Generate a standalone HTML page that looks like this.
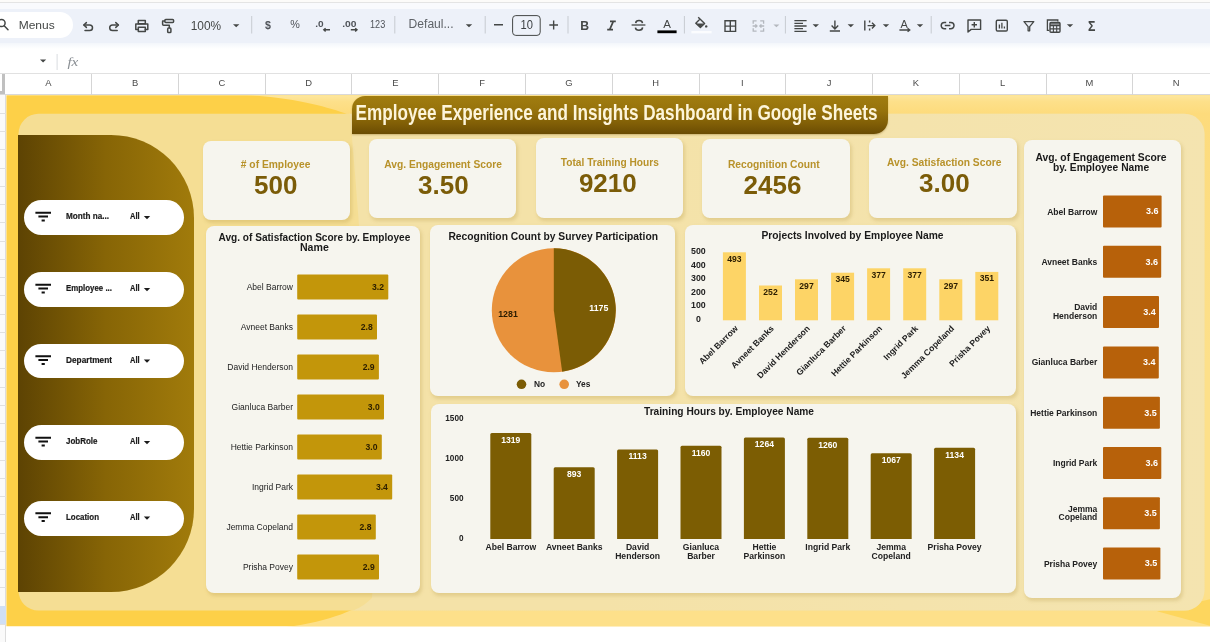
<!DOCTYPE html>
<html><head><meta charset="utf-8"><title>Employee Experience and Insights Dashboard</title>
<style>
html,body{margin:0;padding:0;background:#fff;}
body{width:1210px;height:642px;overflow:hidden;position:relative;font-family:"Liberation Sans",sans-serif;}
.abs{position:absolute;}
.card{position:absolute;background:#f6f5ee;border-radius:8px;box-shadow:1.5px 2.5px 3.5px rgba(165,130,40,.22);}
.pill{position:absolute;background:#fff;border-radius:18px;}
svg{position:absolute;left:0;top:0;will-change:transform;}
svg text{font-family:"Liberation Sans",sans-serif;}
</style></head><body>

<div class="abs" style="left:0;top:0;width:1210px;height:3px;background:#fcfbf9"></div>
<div class="abs" style="left:0;top:2px;width:1210px;height:1px;background:#e4e4e4"></div>
<div class="abs" style="left:0;top:3px;width:1210px;height:6px;background:#f9fafd"></div>
<div class="abs" style="left:0;top:8.6px;width:1210px;height:34.4px;background:#edf1f9"></div>
<div class="abs" style="left:0;top:43px;width:1210px;height:6px;background:linear-gradient(#f3f6fb,#ffffff)"></div>
<div class="abs" style="left:-20px;top:12.4px;width:93px;height:25.2px;border-radius:13px;background:#fff"></div>
<div class="abs" style="left:0;top:73px;width:1210px;height:22px;background:#fff;border-top:1px solid #e1e1e1;box-sizing:border-box"></div>
<div class="abs" style="left:0;top:94px;width:1210px;height:1px;background:#d9d9d9"></div>
<div class="abs" style="left:91.2px;top:74px;width:1px;height:21px;background:#d5d5d5"></div>
<div class="abs" style="left:177.9px;top:74px;width:1px;height:21px;background:#d5d5d5"></div>
<div class="abs" style="left:264.7px;top:74px;width:1px;height:21px;background:#d5d5d5"></div>
<div class="abs" style="left:351.4px;top:74px;width:1px;height:21px;background:#d5d5d5"></div>
<div class="abs" style="left:438.2px;top:74px;width:1px;height:21px;background:#d5d5d5"></div>
<div class="abs" style="left:525.0px;top:74px;width:1px;height:21px;background:#d5d5d5"></div>
<div class="abs" style="left:611.7px;top:74px;width:1px;height:21px;background:#d5d5d5"></div>
<div class="abs" style="left:698.5px;top:74px;width:1px;height:21px;background:#d5d5d5"></div>
<div class="abs" style="left:785.2px;top:74px;width:1px;height:21px;background:#d5d5d5"></div>
<div class="abs" style="left:872.0px;top:74px;width:1px;height:21px;background:#d5d5d5"></div>
<div class="abs" style="left:958.7px;top:74px;width:1px;height:21px;background:#d5d5d5"></div>
<div class="abs" style="left:1045.5px;top:74px;width:1px;height:21px;background:#d5d5d5"></div>
<div class="abs" style="left:1132.2px;top:74px;width:1px;height:21px;background:#d5d5d5"></div>
<div class="abs" style="left:0;top:95px;width:6.4px;height:547px;background:#fafafa;border-right:1px solid #dcdcdc;box-sizing:border-box"></div>
<div class="abs" style="left:0;top:112.8px;width:6px;height:1px;background:#e0e0e0"></div>
<div class="abs" style="left:0;top:131.1px;width:6px;height:1px;background:#e0e0e0"></div>
<div class="abs" style="left:0;top:149.3px;width:6px;height:1px;background:#e0e0e0"></div>
<div class="abs" style="left:0;top:167.6px;width:6px;height:1px;background:#e0e0e0"></div>
<div class="abs" style="left:0;top:185.8px;width:6px;height:1px;background:#e0e0e0"></div>
<div class="abs" style="left:0;top:204.1px;width:6px;height:1px;background:#e0e0e0"></div>
<div class="abs" style="left:0;top:222.3px;width:6px;height:1px;background:#e0e0e0"></div>
<div class="abs" style="left:0;top:240.6px;width:6px;height:1px;background:#e0e0e0"></div>
<div class="abs" style="left:0;top:258.8px;width:6px;height:1px;background:#e0e0e0"></div>
<div class="abs" style="left:0;top:277.1px;width:6px;height:1px;background:#e0e0e0"></div>
<div class="abs" style="left:0;top:295.3px;width:6px;height:1px;background:#e0e0e0"></div>
<div class="abs" style="left:0;top:313.6px;width:6px;height:1px;background:#e0e0e0"></div>
<div class="abs" style="left:0;top:331.8px;width:6px;height:1px;background:#e0e0e0"></div>
<div class="abs" style="left:0;top:350.1px;width:6px;height:1px;background:#e0e0e0"></div>
<div class="abs" style="left:0;top:368.3px;width:6px;height:1px;background:#e0e0e0"></div>
<div class="abs" style="left:0;top:386.6px;width:6px;height:1px;background:#e0e0e0"></div>
<div class="abs" style="left:0;top:404.8px;width:6px;height:1px;background:#e0e0e0"></div>
<div class="abs" style="left:0;top:423.1px;width:6px;height:1px;background:#e0e0e0"></div>
<div class="abs" style="left:0;top:441.3px;width:6px;height:1px;background:#e0e0e0"></div>
<div class="abs" style="left:0;top:459.6px;width:6px;height:1px;background:#e0e0e0"></div>
<div class="abs" style="left:0;top:477.8px;width:6px;height:1px;background:#e0e0e0"></div>
<div class="abs" style="left:0;top:496.1px;width:6px;height:1px;background:#e0e0e0"></div>
<div class="abs" style="left:0;top:514.3px;width:6px;height:1px;background:#e0e0e0"></div>
<div class="abs" style="left:0;top:532.5px;width:6px;height:1px;background:#e0e0e0"></div>
<div class="abs" style="left:0;top:550.8px;width:6px;height:1px;background:#e0e0e0"></div>
<div class="abs" style="left:0;top:569.0px;width:6px;height:1px;background:#e0e0e0"></div>
<div class="abs" style="left:0;top:587.3px;width:6px;height:1px;background:#e0e0e0"></div>
<div class="abs" style="left:0;top:605.5px;width:6px;height:1px;background:#e0e0e0"></div>
<div class="abs" style="left:0;top:623.8px;width:6px;height:1px;background:#e0e0e0"></div>
<div class="abs" style="left:0;top:605.6px;width:5.6px;height:18.2px;background:#d0dff5"></div>
<div class="abs" style="left:1.8px;top:73.5px;width:3.4px;height:20px;background:#c0c0c0"></div>
<div class="abs" style="left:0;top:91px;width:5.2px;height:3px;background:#c0c0c0"></div>
<svg width="1210" height="642" viewBox="0 0 1210 642">
<defs>
<clipPath id="cd"><rect x="6.4" y="95.3" width="1204" height="531"/></clipPath>
<clipPath id="ci"><rect x="18.5" y="113.8" width="1186" height="496.8" rx="20"/></clipPath>
<linearGradient id="gl" x1="0" x2="0" y1="95" y2="627" gradientUnits="userSpaceOnUse"><stop offset="0" stop-color="#fde7a0"/><stop offset="0.012" stop-color="#fde08a"/><stop offset="0.035" stop-color="#fddb7c"/><stop offset="0.5" stop-color="#fde08a"/><stop offset="1" stop-color="#fde08a"/></linearGradient>
<linearGradient id="gi" x1="0" x2="1" y1="0" y2="0"><stop offset="0" stop-color="#f4e2a8"/><stop offset="0.3" stop-color="#f4e2a8"/><stop offset="1" stop-color="#f4e4b0"/></linearGradient>
</defs>
<g clip-path="url(#cd)">
<rect x="6" y="95" width="1204" height="532" fill="#fdd048"/>
<path d="M225 94 C 290 96, 325 106, 348 114.5 L 372 598 C 360 608, 330 622, 286 627 L 1215 627 L 1215 94 Z" fill="url(#gl)"/>
<path d="M1157 611.3 L1215 598 L1215 627 Z" fill="#fdd65e"/>
</g>
<rect x="18.5" y="113.8" width="1186" height="496.8" rx="20" fill="#f5de94"/>
<g clip-path="url(#ci)"><path d="M340 100 L 350 114.5 C 362 250, 380 500, 372 598 C 366 604, 360 608, 350 612 L 1215 627 L 1215 94 Z" fill="url(#gi)"/></g>
</svg>
<div class="abs" style="left:18px;top:134.5px;width:176px;height:457.5px;border-radius:0 83px 83px 0;background:linear-gradient(90deg,#5d4303 0%,#876506 50%,#a17b0b 100%)"></div>
<div class="abs" style="left:351.5px;top:96px;width:536px;height:38.3px;border-radius:13px 0 14px 0;box-shadow:0 1px 2px rgba(120,90,10,.35);background:linear-gradient(180deg,#a17d10 0%,#96720b 40%,#7f5d06 75%,#6a4c03 100%)"></div>
<div class="card" style="left:202.6px;top:141.2px;width:147px;height:79px"></div>
<div class="card" style="left:368.6px;top:139px;width:147.6px;height:79px"></div>
<div class="card" style="left:535.7px;top:138.4px;width:147.2px;height:79.3px"></div>
<div class="card" style="left:702px;top:139px;width:148.1px;height:79px"></div>
<div class="card" style="left:869px;top:138.4px;width:147.6px;height:79.3px"></div>
<div class="card" style="left:205.9px;top:225.9px;width:214.5px;height:367px"></div>
<div class="card" style="left:430.4px;top:225.4px;width:244.8px;height:170.8px"></div>
<div class="card" style="left:684.5px;top:225.4px;width:331.6px;height:170.3px"></div>
<div class="card" style="left:430.8px;top:404.2px;width:585px;height:188.6px"></div>
<div class="card" style="left:1024.4px;top:140.1px;width:156.3px;height:457.8px"></div>
<div class="pill" style="left:24px;top:200px;width:160px;height:34.5px"></div>
<div class="pill" style="left:24px;top:272px;width:160px;height:34.5px"></div>
<div class="pill" style="left:24px;top:343.5px;width:160px;height:34.5px"></div>
<div class="pill" style="left:24px;top:425px;width:160px;height:34.5px"></div>
<div class="pill" style="left:24px;top:501.4px;width:160px;height:34.5px"></div>
<svg width="1210" height="642" viewBox="0 0 1210 642">
<g fill="none" stroke="#444746" stroke-width="1.5" stroke-linecap="round" stroke-linejoin="round">
<circle cx="1.5" cy="23" r="3.6"/><path d="M4.2 25.8 L8 29.8"/>
<path d="M86.4 22.6 L83.8 25 L86.4 27.4"/><path d="M84 25 H89.6 a2.9 2.8 0 0 1 0 5.6 H85"/>
<path d="M115.8 22.6 L118.4 25 L115.8 27.4"/><path d="M118.2 25 H112.6 a2.9 2.8 0 0 0 0 5.6 H117.2"/>
<rect x="138.3" y="20.5" width="7" height="3.2"/><path d="M138.3 29.5 H135.8 V23.9 H147.8 V29.5 H145.3"/><rect x="138.3" y="27.2" width="7" height="4.2"/>
<rect x="164.8" y="19.4" width="8.8" height="3.2" rx="1"/><path d="M164.8 21 H162.6 V24.2 Q162.6 25.2 163.6 25.2 H169.3 V27.8"/><rect x="167.7" y="28" width="3.2" height="4.6" rx="0.9"/>
</g>
<text x="18.7" y="29.2" font-size="11.8" font-weight="normal" fill="#444746" text-anchor="start" textLength="36" lengthAdjust="spacingAndGlyphs" >Menus</text>
<text x="190.7" y="29.7" font-size="12" font-weight="normal" fill="#444746" text-anchor="start" textLength="30.4" lengthAdjust="spacingAndGlyphs" >100%</text>
<path d="M233 24.2 h6.4 l-3.2 3 z" fill="#444746"/>
<rect x="251.2" y="16" width="1" height="17.5" fill="#c7cbd1"/>
<rect x="394.3" y="16" width="1" height="17.5" fill="#c7cbd1"/>
<rect x="484.7" y="16" width="1" height="17.5" fill="#c7cbd1"/>
<rect x="567.5" y="16" width="1" height="17.5" fill="#c7cbd1"/>
<rect x="683.9" y="16" width="1" height="17.5" fill="#c7cbd1"/>
<rect x="784.9" y="16" width="1" height="17.5" fill="#c7cbd1"/>
<rect x="930.7" y="16" width="1" height="17.5" fill="#c7cbd1"/>
<text x="268" y="28.7" font-size="10.6" font-weight="bold" fill="#50545a" text-anchor="middle" >$</text>
<text x="295" y="28" font-size="10.8" font-weight="normal" fill="#50545a" text-anchor="middle" >%</text>
<text x="315.2" y="26.6" font-size="9.8" font-weight="bold" fill="#50545a" text-anchor="start" textLength="8.4" lengthAdjust="spacingAndGlyphs" >.0</text>
<path d="M330 29.8 H323.8 M325.6 28.2 L323.8 29.8 L325.6 31.4" fill="none" stroke="#444746" stroke-width="1.4"/>
<text x="342.2" y="26.6" font-size="9.8" font-weight="bold" fill="#50545a" text-anchor="start" textLength="14.3" lengthAdjust="spacingAndGlyphs" >.00</text>
<path d="M350.8 29.8 H357 M355.2 28.2 L357 29.8 L355.2 31.4" fill="none" stroke="#444746" stroke-width="1.4"/>
<text x="370" y="28.3" font-size="10.2" font-weight="normal" fill="#50545a" text-anchor="start" textLength="15.2" lengthAdjust="spacingAndGlyphs" >123</text>
<text x="408.6" y="28.4" font-size="12" font-weight="normal" fill="#5f6368" text-anchor="start" textLength="45" lengthAdjust="spacingAndGlyphs" >Defaul...</text>
<path d="M465.8 24.2 h6.4 l-3.2 3 z" fill="#444746"/>
<rect x="494" y="24" width="9" height="1.5" fill="#444746"/>
<rect x="512.6" y="15.6" width="27.6" height="19.8" rx="3.2" fill="none" stroke="#444746" stroke-width="1"/>
<text x="526.8" y="29.3" font-size="12.2" font-weight="normal" fill="#3c4043" text-anchor="middle" textLength="12.4" lengthAdjust="spacingAndGlyphs" >10</text>
<path d="M549.3 25 H558 M553.65 20.6 V29.4" stroke="#444746" stroke-width="1.4" fill="none"/>
<text x="584.6" y="29.6" font-size="12.2" font-weight="bold" fill="#444746" text-anchor="middle" >B</text>
<path d="M610 21.4 H615.8 M607.2 29.6 H613 M613.3 21.4 L609.7 29.6" stroke="#444746" stroke-width="1.7" fill="none"/>
<path d="M631.6 25 H645.4" stroke="#444746" stroke-width="1.3" fill="none"/><path d="M642.5 23.1 C642.3 21.4 640.8 20.6 639 20.6 C637.2 20.6 635.8 21.5 635.7 23.1 M635.4 27.6 C635.6 29.4 637.1 30.2 639 30.2 C640.9 30.2 642.5 29.3 642.6 27.4" stroke="#444746" stroke-width="1.5" fill="none"/>
<text x="667" y="28" font-size="11.5" font-weight="normal" fill="#444746" text-anchor="middle" >A</text>
<rect x="657.4" y="30.4" width="19.2" height="2.8" fill="#000"/>
<path d="M698.2 17.2 L704.6 23.6 L700.4 27.6 L695.8 23.2 L700 19" fill="none" stroke="#444746" stroke-width="1.4" stroke-linejoin="round"/><path d="M696.4 23.4 H704.2 L700.4 27 Z" fill="#444746"/><circle cx="706.2" cy="26.4" r="1.2" fill="#444746"/>
<rect x="691.4" y="31" width="20.2" height="2.4" fill="#fbfcfe"/>
<path d="M725 20.8 H735.6 V31.4 H725 Z M730.3 20.8 V31.4 M725 26.1 H735.6" fill="none" stroke="#444746" stroke-width="1.4"/>
<path d="M756.6 20.8 H753.2 V23.8 M753.2 28.2 V31.2 H756.6 M760.2 20.8 H763.6 V23.8 M763.6 28.2 V31.2 H760.2 M752.6 26 H757 M755.4 24.4 L757 26 L755.4 27.6 M764.2 26 H759.8 M761.4 24.4 L759.8 26 L761.4 27.6" fill="none" stroke="#b4b8be" stroke-width="1.3"/>
<path d="M773.4 24.4 h6 l-3.0 2.8 z" fill="#b4b8be"/>
<path d="M794.4 20.6 H806.6 M794.4 23.3 H803 M794.4 26 H806.6 M794.4 28.7 H803 M794.4 31.4 H806.6" stroke="#444746" stroke-width="1.3" fill="none"/>
<path d="M812.6 24.2 h6.4 l-3.2 3 z" fill="#444746"/>
<path d="M834.9 20.4 V28.6 M831.6 25.6 L834.9 28.9 L838.2 25.6 M829.8 31 H840" stroke="#444746" stroke-width="1.4" fill="none"/>
<path d="M847.6 24.2 h6.4 l-3.2 3 z" fill="#444746"/>
<path d="M864.8 20.6 V30.6 M869.6 20.6 V22.6 M869.6 28.6 V30.6 M867.6 25.6 H874.6 M872 22.8 L874.8 25.6 L872 28.4" stroke="#444746" stroke-width="1.4" fill="none"/>
<path d="M882.8 24.2 h6.4 l-3.2 3 z" fill="#444746"/>
<text x="904.2" y="27.8" font-size="11" font-weight="normal" fill="#444746" text-anchor="middle" >A</text>
<path d="M899.4 30 H909.6 M907.6 28.2 L909.8 30 L907.6 31.8" stroke="#444746" stroke-width="1.3" fill="none"/>
<path d="M916.8 24.2 h6.4 l-3.2 3 z" fill="#444746"/>
<path d="M946.2 22.4 H944.4 a3.2 3.2 0 0 0 0 6.4 H946.2 M949 22.4 H950.8 a3.2 3.2 0 0 1 0 6.4 H949 M944.8 25.6 H950.4" stroke="#444746" stroke-width="1.5" fill="none"/>
<path d="M968 20 H980.6 V29.4 H971.2 L968 32 Z M974.3 22 V27.4 M971.6 24.7 H977" stroke="#444746" stroke-width="1.4" fill="none" stroke-linejoin="round"/>
<rect x="996.3" y="20.2" width="11" height="10.8" rx="1.2" stroke="#444746" stroke-width="1.4" fill="none"/><path d="M999.4 28.6 V24.6 M1001.9 28.6 V22.8 M1004.4 28.6 V26.6" stroke="#444746" stroke-width="1.3" fill="none"/>
<path d="M1024 21.6 H1033.8 L1029.7 26.6 V30.8 H1028.1 V26.6 Z" stroke="#444746" stroke-width="1.3" fill="none" stroke-linejoin="round"/>
<path d="M1049.2 30.4 H1047.4 V20 H1057.8 V21.6" stroke="#444746" stroke-width="1.3" fill="none"/><rect x="1050" y="22.4" width="10" height="9.8" rx="1" stroke="#444746" stroke-width="1.4" fill="none"/><path d="M1050 25.6 H1060 M1050 28.9 H1060 M1053.4 25.6 V32 M1056.7 25.6 V32" stroke="#444746" stroke-width="1.1" fill="none"/><rect x="1050" y="22.4" width="10" height="2.4" fill="#444746" opacity="0.75"/>
<path d="M1066.8 24.2 h6.4 l-3.2 3 z" fill="#444746"/>
<text x="1091.7" y="30.7" font-size="14.2" font-weight="bold" fill="#444746" text-anchor="middle" textLength="7.4" lengthAdjust="spacingAndGlyphs" >Σ</text>
<path d="M40 59.6 h6.2 l-3.1 2.9 z" fill="#444746"/>
<rect x="56.6" y="54" width="1" height="16" fill="#dadce0"/>
<text x="67.4" y="66" font-size="13" font-weight="normal" fill="#8a8f94" text-anchor="start" textLength="11" lengthAdjust="spacingAndGlyphs" style="font-style:italic;font-family:'Liberation Serif',serif">fx</text>
<text x="48.4" y="85.7" font-size="9.4" font-weight="normal" fill="#4a4a4a" text-anchor="middle" >A</text>
<text x="135.2" y="85.7" font-size="9.4" font-weight="normal" fill="#4a4a4a" text-anchor="middle" >B</text>
<text x="221.9" y="85.7" font-size="9.4" font-weight="normal" fill="#4a4a4a" text-anchor="middle" >C</text>
<text x="308.6" y="85.7" font-size="9.4" font-weight="normal" fill="#4a4a4a" text-anchor="middle" >D</text>
<text x="395.4" y="85.7" font-size="9.4" font-weight="normal" fill="#4a4a4a" text-anchor="middle" >E</text>
<text x="482.1" y="85.7" font-size="9.4" font-weight="normal" fill="#4a4a4a" text-anchor="middle" >F</text>
<text x="568.9" y="85.7" font-size="9.4" font-weight="normal" fill="#4a4a4a" text-anchor="middle" >G</text>
<text x="655.6" y="85.7" font-size="9.4" font-weight="normal" fill="#4a4a4a" text-anchor="middle" >H</text>
<text x="742.4" y="85.7" font-size="9.4" font-weight="normal" fill="#4a4a4a" text-anchor="middle" >I</text>
<text x="829.1" y="85.7" font-size="9.4" font-weight="normal" fill="#4a4a4a" text-anchor="middle" >J</text>
<text x="915.9" y="85.7" font-size="9.4" font-weight="normal" fill="#4a4a4a" text-anchor="middle" >K</text>
<text x="1002.6" y="85.7" font-size="9.4" font-weight="normal" fill="#4a4a4a" text-anchor="middle" >L</text>
<text x="1089.4" y="85.7" font-size="9.4" font-weight="normal" fill="#4a4a4a" text-anchor="middle" >M</text>
<text x="1176.2" y="85.7" font-size="9.4" font-weight="normal" fill="#4a4a4a" text-anchor="middle" >N</text>
<text x="355.5" y="119.8" font-size="22" font-weight="bold" fill="#fdf5da" text-anchor="start" textLength="522" lengthAdjust="spacingAndGlyphs" >Employee Experience and Insights Dashboard in Google Sheets</text>
<text x="275.6" y="167.8" font-size="10.6" font-weight="bold" fill="#b8922a" text-anchor="middle" textLength="69.6" lengthAdjust="spacingAndGlyphs" ># of Employee</text>
<text x="275.8" y="194.4" font-size="26" font-weight="bold" fill="#7b5c08" text-anchor="middle" >500</text>
<text x="443.1" y="167.7" font-size="10.6" font-weight="bold" fill="#b8922a" text-anchor="middle" textLength="117.6" lengthAdjust="spacingAndGlyphs" >Avg. Engagement Score</text>
<text x="443.4" y="194.4" font-size="26" font-weight="bold" fill="#7b5c08" text-anchor="middle" >3.50</text>
<text x="609.8" y="165.6" font-size="10.6" font-weight="bold" fill="#b8922a" text-anchor="middle" textLength="98" lengthAdjust="spacingAndGlyphs" >Total Training Hours</text>
<text x="607.8" y="192.4" font-size="26" font-weight="bold" fill="#7b5c08" text-anchor="middle" >9210</text>
<text x="773.8" y="167.7" font-size="10.6" font-weight="bold" fill="#b8922a" text-anchor="middle" textLength="91.8" lengthAdjust="spacingAndGlyphs" >Recognition Count</text>
<text x="772.5" y="194.4" font-size="26" font-weight="bold" fill="#7b5c08" text-anchor="middle" >2456</text>
<text x="944.2" y="165.6" font-size="10.6" font-weight="bold" fill="#b8922a" text-anchor="middle" textLength="114.4" lengthAdjust="spacingAndGlyphs" >Avg. Satisfaction Score</text>
<text x="944.4" y="192.3" font-size="26" font-weight="bold" fill="#7b5c08" text-anchor="middle" >3.00</text>
<path d="M35.4 212.7 H51 M38.4 216.6 H48 M41.6 220.4 H44.8" stroke="#111" stroke-width="2" fill="none"/>
<text x="66" y="219.2" font-size="8.8" font-weight="bold" fill="#1b1b1b" text-anchor="start" textLength="43" lengthAdjust="spacingAndGlyphs" stroke="#1b1b1b" stroke-width="0.2">Month na...</text>
<text x="130" y="219.2" font-size="8.8" font-weight="bold" fill="#1b1b1b" text-anchor="start" textLength="9.6" lengthAdjust="spacingAndGlyphs" stroke="#1b1b1b" stroke-width="0.2">All</text>
<path d="M143.8 216.0 h6.4 l-3.2 3.2 z" fill="#1b1b1b"/>
<path d="M35.4 284.7 H51 M38.4 288.6 H48 M41.6 292.4 H44.8" stroke="#111" stroke-width="2" fill="none"/>
<text x="66" y="291.2" font-size="8.8" font-weight="bold" fill="#1b1b1b" text-anchor="start" textLength="46" lengthAdjust="spacingAndGlyphs" stroke="#1b1b1b" stroke-width="0.2">Employee ...</text>
<text x="130" y="291.2" font-size="8.8" font-weight="bold" fill="#1b1b1b" text-anchor="start" textLength="9.6" lengthAdjust="spacingAndGlyphs" stroke="#1b1b1b" stroke-width="0.2">All</text>
<path d="M143.8 288.0 h6.4 l-3.2 3.2 z" fill="#1b1b1b"/>
<path d="M35.4 356.2 H51 M38.4 360.1 H48 M41.6 363.9 H44.8" stroke="#111" stroke-width="2" fill="none"/>
<text x="66" y="362.7" font-size="8.8" font-weight="bold" fill="#1b1b1b" text-anchor="start" textLength="46" lengthAdjust="spacingAndGlyphs" stroke="#1b1b1b" stroke-width="0.2">Department</text>
<text x="130" y="362.7" font-size="8.8" font-weight="bold" fill="#1b1b1b" text-anchor="start" textLength="9.6" lengthAdjust="spacingAndGlyphs" stroke="#1b1b1b" stroke-width="0.2">All</text>
<path d="M143.8 359.5 h6.4 l-3.2 3.2 z" fill="#1b1b1b"/>
<path d="M35.4 437.7 H51 M38.4 441.6 H48 M41.6 445.4 H44.8" stroke="#111" stroke-width="2" fill="none"/>
<text x="66" y="444.2" font-size="8.8" font-weight="bold" fill="#1b1b1b" text-anchor="start" textLength="31.5" lengthAdjust="spacingAndGlyphs" stroke="#1b1b1b" stroke-width="0.2">JobRole</text>
<text x="130" y="444.2" font-size="8.8" font-weight="bold" fill="#1b1b1b" text-anchor="start" textLength="9.6" lengthAdjust="spacingAndGlyphs" stroke="#1b1b1b" stroke-width="0.2">All</text>
<path d="M143.8 441.0 h6.4 l-3.2 3.2 z" fill="#1b1b1b"/>
<path d="M35.4 513.3000000000001 H51 M38.4 517.2 H48 M41.6 521.0 H44.8" stroke="#111" stroke-width="2" fill="none"/>
<text x="66" y="519.8000000000001" font-size="8.8" font-weight="bold" fill="#1b1b1b" text-anchor="start" textLength="33" lengthAdjust="spacingAndGlyphs" stroke="#1b1b1b" stroke-width="0.2">Location</text>
<text x="130" y="519.8000000000001" font-size="8.8" font-weight="bold" fill="#1b1b1b" text-anchor="start" textLength="9.6" lengthAdjust="spacingAndGlyphs" stroke="#1b1b1b" stroke-width="0.2">All</text>
<path d="M143.8 516.6 h6.4 l-3.2 3.2 z" fill="#1b1b1b"/>
<text x="314.4" y="241" font-size="10.6" font-weight="bold" fill="#1a1a1a" text-anchor="middle" textLength="191.7" lengthAdjust="spacingAndGlyphs" >Avg. of Satisfaction Score by. Employee</text>
<text x="314.4" y="250.8" font-size="10.6" font-weight="bold" fill="#1a1a1a" text-anchor="middle" >Name</text>
<rect x="297.2" y="274.6" width="91.1" height="24.9" rx="1" fill="#c3960a"/>
<text x="293" y="290.1" font-size="8.5" font-weight="normal" fill="#222" text-anchor="end" >Abel Barrow</text>
<text x="384.0" y="290.0" font-size="8.6" font-weight="bold" fill="#2a1d00" text-anchor="end" >3.2</text>
<rect x="297.2" y="314.6" width="79.8" height="24.9" rx="1" fill="#c3960a"/>
<text x="293" y="330.1" font-size="8.5" font-weight="normal" fill="#222" text-anchor="end" >Avneet Banks</text>
<text x="372.7" y="330.0" font-size="8.6" font-weight="bold" fill="#2a1d00" text-anchor="end" >2.8</text>
<rect x="297.2" y="354.6" width="81.7" height="24.9" rx="1" fill="#c3960a"/>
<text x="293" y="370.1" font-size="8.5" font-weight="normal" fill="#222" text-anchor="end" >David Henderson</text>
<text x="374.6" y="370.0" font-size="8.6" font-weight="bold" fill="#2a1d00" text-anchor="end" >2.9</text>
<rect x="297.2" y="394.6" width="86.8" height="24.9" rx="1" fill="#c3960a"/>
<text x="293" y="410.1" font-size="8.5" font-weight="normal" fill="#222" text-anchor="end" >Gianluca Barber</text>
<text x="379.7" y="410.0" font-size="8.6" font-weight="bold" fill="#2a1d00" text-anchor="end" >3.0</text>
<rect x="297.2" y="434.6" width="84.6" height="24.9" rx="1" fill="#c3960a"/>
<text x="293" y="450.1" font-size="8.5" font-weight="normal" fill="#222" text-anchor="end" >Hettie Parkinson</text>
<text x="377.5" y="450.0" font-size="8.6" font-weight="bold" fill="#2a1d00" text-anchor="end" >3.0</text>
<rect x="297.2" y="474.6" width="95.0" height="24.9" rx="1" fill="#c3960a"/>
<text x="293" y="490.1" font-size="8.5" font-weight="normal" fill="#222" text-anchor="end" >Ingrid Park</text>
<text x="387.9" y="490.0" font-size="8.6" font-weight="bold" fill="#2a1d00" text-anchor="end" >3.4</text>
<rect x="297.2" y="514.6" width="78.6" height="24.9" rx="1" fill="#c3960a"/>
<text x="293" y="530.1" font-size="8.5" font-weight="normal" fill="#222" text-anchor="end" >Jemma Copeland</text>
<text x="371.5" y="530.0" font-size="8.6" font-weight="bold" fill="#2a1d00" text-anchor="end" >2.8</text>
<rect x="297.2" y="554.6" width="81.8" height="24.9" rx="1" fill="#c3960a"/>
<text x="293" y="570.1" font-size="8.5" font-weight="normal" fill="#222" text-anchor="end" >Prisha Povey</text>
<text x="374.7" y="570.0" font-size="8.6" font-weight="bold" fill="#2a1d00" text-anchor="end" >2.9</text>
<text x="553.2" y="240.4" font-size="10.6" font-weight="bold" fill="#1a1a1a" text-anchor="middle" textLength="209.6" lengthAdjust="spacingAndGlyphs" >Recognition Count by Survey Participation</text>
<circle cx="553.8" cy="310.3" r="62" fill="#e8923c"/>
<path d="M553.8 310.3 L553.8 248.3 A62 62 0 0 1 562.18 371.73 Z" fill="#7b5c05"/>
<text x="598.8" y="311.2" font-size="8.8" font-weight="bold" fill="#fff" text-anchor="middle" >1175</text>
<text x="508" y="316.8" font-size="8.8" font-weight="bold" fill="#2a1c00" text-anchor="middle" >1281</text>
<circle cx="521.5" cy="384.3" r="4.8" fill="#7b5c05"/><circle cx="564.2" cy="384.3" r="4.8" fill="#e8923c"/>
<text x="534" y="387.3" font-size="8.4" font-weight="bold" fill="#222" text-anchor="start" >No</text>
<text x="576" y="387.3" font-size="8.4" font-weight="bold" fill="#222" text-anchor="start" >Yes</text>
<text x="852.5" y="238.8" font-size="10.6" font-weight="bold" fill="#1a1a1a" text-anchor="middle" textLength="182" lengthAdjust="spacingAndGlyphs" >Projects Involved by Employee Name</text>
<text x="698.4" y="321.9" font-size="8.8" font-weight="bold" fill="#222" text-anchor="middle" >0</text>
<text x="698.4" y="308.3" font-size="8.8" font-weight="bold" fill="#222" text-anchor="middle" >100</text>
<text x="698.4" y="294.7" font-size="8.8" font-weight="bold" fill="#222" text-anchor="middle" >200</text>
<text x="698.4" y="281.1" font-size="8.8" font-weight="bold" fill="#222" text-anchor="middle" >300</text>
<text x="698.4" y="267.5" font-size="8.8" font-weight="bold" fill="#222" text-anchor="middle" >400</text>
<text x="698.4" y="253.9" font-size="8.8" font-weight="bold" fill="#222" text-anchor="middle" >500</text>
<rect x="722.9" y="252.3" width="23" height="68.0" fill="#fdd466"/>
<text x="734.4" y="261.5" font-size="8.6" font-weight="bold" fill="#2a1c00" text-anchor="middle" >493</text>
<text transform="translate(738.4 329) rotate(-45)" font-size="8.6" font-weight="bold" fill="#222" text-anchor="end">Abel Barrow</text>
<rect x="759.0" y="285.5" width="23" height="34.8" fill="#fdd466"/>
<text x="770.5" y="294.7" font-size="8.6" font-weight="bold" fill="#2a1c00" text-anchor="middle" >252</text>
<text transform="translate(774.5 329) rotate(-45)" font-size="8.6" font-weight="bold" fill="#222" text-anchor="end">Avneet Banks</text>
<rect x="795.0" y="279.3" width="23" height="41.0" fill="#fdd466"/>
<text x="806.5" y="288.5" font-size="8.6" font-weight="bold" fill="#2a1c00" text-anchor="middle" >297</text>
<text transform="translate(810.5 329) rotate(-45)" font-size="8.6" font-weight="bold" fill="#222" text-anchor="end">David Henderson</text>
<rect x="831.1" y="272.7" width="23" height="47.6" fill="#fdd466"/>
<text x="842.6" y="281.9" font-size="8.6" font-weight="bold" fill="#2a1c00" text-anchor="middle" >345</text>
<text transform="translate(846.6 329) rotate(-45)" font-size="8.6" font-weight="bold" fill="#222" text-anchor="end">Gianluca Barber</text>
<rect x="867.1" y="268.3" width="23" height="52.0" fill="#fdd466"/>
<text x="878.6" y="277.5" font-size="8.6" font-weight="bold" fill="#2a1c00" text-anchor="middle" >377</text>
<text transform="translate(882.6 329) rotate(-45)" font-size="8.6" font-weight="bold" fill="#222" text-anchor="end">Hettie Parkinson</text>
<rect x="903.2" y="268.3" width="23" height="52.0" fill="#fdd466"/>
<text x="914.7" y="277.5" font-size="8.6" font-weight="bold" fill="#2a1c00" text-anchor="middle" >377</text>
<text transform="translate(918.7 329) rotate(-45)" font-size="8.6" font-weight="bold" fill="#222" text-anchor="end">Ingrid Park</text>
<rect x="939.3" y="279.3" width="23" height="41.0" fill="#fdd466"/>
<text x="950.8" y="288.5" font-size="8.6" font-weight="bold" fill="#2a1c00" text-anchor="middle" >297</text>
<text transform="translate(954.8 329) rotate(-45)" font-size="8.6" font-weight="bold" fill="#222" text-anchor="end">Jemma Copeland</text>
<rect x="975.3" y="271.9" width="23" height="48.4" fill="#fdd466"/>
<text x="986.8" y="281.1" font-size="8.6" font-weight="bold" fill="#2a1c00" text-anchor="middle" >351</text>
<text transform="translate(990.8 329) rotate(-45)" font-size="8.6" font-weight="bold" fill="#222" text-anchor="end">Prisha Povey</text>
<text x="729" y="415" font-size="10.6" font-weight="bold" fill="#1a1a1a" text-anchor="middle" textLength="170" lengthAdjust="spacingAndGlyphs" >Training Hours by. Employee Name</text>
<text x="463.5" y="541.3" font-size="8.2" font-weight="bold" fill="#222" text-anchor="end" >0</text>
<text x="463.5" y="501.1" font-size="8.2" font-weight="bold" fill="#222" text-anchor="end" >500</text>
<text x="463.5" y="461.0" font-size="8.2" font-weight="bold" fill="#222" text-anchor="end" >1000</text>
<text x="463.5" y="420.8" font-size="8.2" font-weight="bold" fill="#222" text-anchor="end" >1500</text>
<path d="M490.3 538.9 V434.5 q0 -1.5 1.5 -1.5 H529.8 q1.5 0 1.5 1.5 V538.9 Z" fill="#7c5d03"/>
<text x="510.8" y="442.9" font-size="8.6" font-weight="bold" fill="#fff" text-anchor="middle" >1319</text>
<text x="510.8" y="550.2" font-size="8.6" font-weight="bold" fill="#222" text-anchor="middle" >Abel Barrow</text>
<path d="M553.7 538.9 V468.7 q0 -1.5 1.5 -1.5 H593.2 q1.5 0 1.5 1.5 V538.9 Z" fill="#7c5d03"/>
<text x="574.2" y="477.1" font-size="8.6" font-weight="bold" fill="#fff" text-anchor="middle" >893</text>
<text x="574.2" y="550.2" font-size="8.6" font-weight="bold" fill="#222" text-anchor="middle" >Avneet Banks</text>
<path d="M617.1 538.9 V451.0 q0 -1.5 1.5 -1.5 H656.6 q1.5 0 1.5 1.5 V538.9 Z" fill="#7c5d03"/>
<text x="637.6" y="459.4" font-size="8.6" font-weight="bold" fill="#fff" text-anchor="middle" >1113</text>
<text x="637.6" y="550.2" font-size="8.6" font-weight="bold" fill="#222" text-anchor="middle" >David</text>
<text x="637.6" y="558.8" font-size="8.6" font-weight="bold" fill="#222" text-anchor="middle" >Henderson</text>
<path d="M680.5 538.9 V447.3 q0 -1.5 1.5 -1.5 H720.0 q1.5 0 1.5 1.5 V538.9 Z" fill="#7c5d03"/>
<text x="701.0" y="455.7" font-size="8.6" font-weight="bold" fill="#fff" text-anchor="middle" >1160</text>
<text x="701.0" y="550.2" font-size="8.6" font-weight="bold" fill="#222" text-anchor="middle" >Gianluca</text>
<text x="701.0" y="558.8" font-size="8.6" font-weight="bold" fill="#222" text-anchor="middle" >Barber</text>
<path d="M743.9 538.9 V438.9 q0 -1.5 1.5 -1.5 H783.4 q1.5 0 1.5 1.5 V538.9 Z" fill="#7c5d03"/>
<text x="764.4" y="447.3" font-size="8.6" font-weight="bold" fill="#fff" text-anchor="middle" >1264</text>
<text x="764.4" y="550.2" font-size="8.6" font-weight="bold" fill="#222" text-anchor="middle" >Hettie</text>
<text x="764.4" y="558.8" font-size="8.6" font-weight="bold" fill="#222" text-anchor="middle" >Parkinson</text>
<path d="M807.3 538.9 V439.2 q0 -1.5 1.5 -1.5 H846.8 q1.5 0 1.5 1.5 V538.9 Z" fill="#7c5d03"/>
<text x="827.8" y="447.6" font-size="8.6" font-weight="bold" fill="#fff" text-anchor="middle" >1260</text>
<text x="827.8" y="550.2" font-size="8.6" font-weight="bold" fill="#222" text-anchor="middle" >Ingrid Park</text>
<path d="M870.7 538.9 V454.7 q0 -1.5 1.5 -1.5 H910.2 q1.5 0 1.5 1.5 V538.9 Z" fill="#7c5d03"/>
<text x="891.2" y="463.1" font-size="8.6" font-weight="bold" fill="#fff" text-anchor="middle" >1067</text>
<text x="891.2" y="550.2" font-size="8.6" font-weight="bold" fill="#222" text-anchor="middle" >Jemma</text>
<text x="891.2" y="558.8" font-size="8.6" font-weight="bold" fill="#222" text-anchor="middle" >Copeland</text>
<path d="M934.1 538.9 V449.3 q0 -1.5 1.5 -1.5 H973.6 q1.5 0 1.5 1.5 V538.9 Z" fill="#7c5d03"/>
<text x="954.6" y="457.7" font-size="8.6" font-weight="bold" fill="#fff" text-anchor="middle" >1134</text>
<text x="954.6" y="550.2" font-size="8.6" font-weight="bold" fill="#222" text-anchor="middle" >Prisha Povey</text>
<text x="1101" y="160.6" font-size="10.6" font-weight="bold" fill="#1a1a1a" text-anchor="middle" textLength="131" lengthAdjust="spacingAndGlyphs" >Avg. of Engagement Score</text>
<text x="1101" y="171" font-size="10.6" font-weight="bold" fill="#1a1a1a" text-anchor="middle" textLength="96.2" lengthAdjust="spacingAndGlyphs" >by. Employee Name</text>
<rect x="1103" y="195.5" width="58.6" height="32" rx="1" fill="#b7610a"/>
<text x="1158.4" y="214.3" font-size="9" font-weight="bold" fill="#fff" text-anchor="end" >3.6</text>
<text x="1097.3" y="214.5" font-size="8.5" font-weight="bold" fill="#222" text-anchor="end" >Abel Barrow</text>
<rect x="1103" y="245.8" width="58.2" height="32" rx="1" fill="#b7610a"/>
<text x="1158.0" y="264.6" font-size="9" font-weight="bold" fill="#fff" text-anchor="end" >3.6</text>
<text x="1097.3" y="264.8" font-size="8.5" font-weight="bold" fill="#222" text-anchor="end" >Avneet Banks</text>
<rect x="1103" y="296.1" width="56.0" height="32" rx="1" fill="#b7610a"/>
<text x="1155.8" y="314.9" font-size="9" font-weight="bold" fill="#fff" text-anchor="end" >3.4</text>
<text x="1097.3" y="310.4" font-size="8.5" font-weight="bold" fill="#222" text-anchor="end" >David</text>
<text x="1097.3" y="319.2" font-size="8.5" font-weight="bold" fill="#222" text-anchor="end" >Henderson</text>
<rect x="1103" y="346.4" width="55.8" height="32" rx="1" fill="#b7610a"/>
<text x="1155.6" y="365.2" font-size="9" font-weight="bold" fill="#fff" text-anchor="end" >3.4</text>
<text x="1097.3" y="365.4" font-size="8.5" font-weight="bold" fill="#222" text-anchor="end" >Gianluca Barber</text>
<rect x="1103" y="396.7" width="56.9" height="32" rx="1" fill="#b7610a"/>
<text x="1156.7" y="415.5" font-size="9" font-weight="bold" fill="#fff" text-anchor="end" >3.5</text>
<text x="1097.3" y="415.7" font-size="8.5" font-weight="bold" fill="#222" text-anchor="end" >Hettie Parkinson</text>
<rect x="1103" y="446.9" width="58.3" height="32" rx="1" fill="#b7610a"/>
<text x="1158.1" y="465.8" font-size="9" font-weight="bold" fill="#fff" text-anchor="end" >3.6</text>
<text x="1097.3" y="465.9" font-size="8.5" font-weight="bold" fill="#222" text-anchor="end" >Ingrid Park</text>
<rect x="1103" y="497.2" width="56.9" height="32" rx="1" fill="#b7610a"/>
<text x="1156.7" y="516.0" font-size="9" font-weight="bold" fill="#fff" text-anchor="end" >3.5</text>
<text x="1097.3" y="511.5" font-size="8.5" font-weight="bold" fill="#222" text-anchor="end" >Jemma</text>
<text x="1097.3" y="520.3" font-size="8.5" font-weight="bold" fill="#222" text-anchor="end" >Copeland</text>
<rect x="1103" y="547.5" width="57.4" height="32" rx="1" fill="#b7610a"/>
<text x="1157.2" y="566.3" font-size="9" font-weight="bold" fill="#fff" text-anchor="end" >3.5</text>
<text x="1097.3" y="566.5" font-size="8.5" font-weight="bold" fill="#222" text-anchor="end" >Prisha Povey</text>
</svg>
</body></html>
